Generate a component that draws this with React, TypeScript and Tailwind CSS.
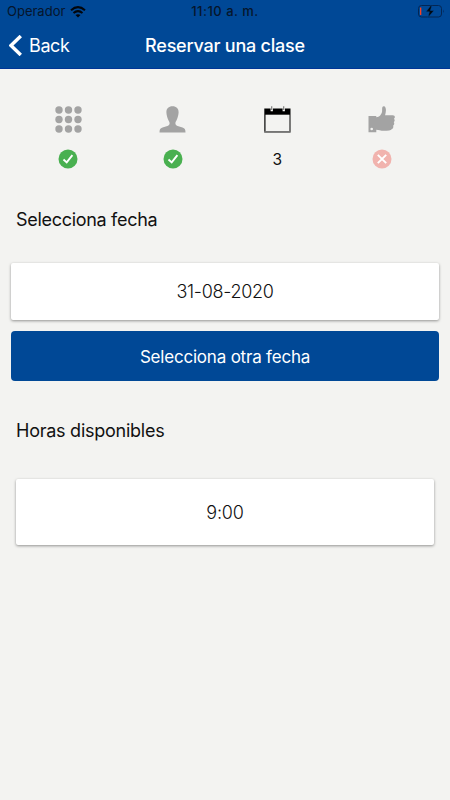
import type { ReactNode } from "react"

function GridIcon() {
  return (
    <svg width="27" height="27" viewBox="0 0 27 27" fill="#a3a3a3">
      {[4, 13.5, 23].map((cy) =>
        [4, 13.5, 23].map((cx) => <circle key={`${cx}-${cy}`} cx={cx} cy={cy} r="3.7" />)
      )}
    </svg>
  )
}

function PersonIcon() {
  return (
    <svg width="27" height="27" viewBox="0 0 27 27" fill="#a3a3a3">
      <path d="M13.5 .3C17.4 .3 19.7 2.7 19.6 6.4C19.5 8.5 18.8 11.4 17.8 13.7C17.1 15.3 16.5 15.8 16.4 17C16.3 18.7 17 19.3 18.6 19.9L23.5 21.5C25.7 22.3 26.5 23.3 26.5 26.5H.5C.5 23.3 1.3 22.3 3.5 21.5L8.4 19.9C10 19.3 10.7 18.7 10.6 17C10.5 15.8 9.9 15.3 9.2 13.7C8.2 11.4 7.5 8.5 7.4 6.4C7.3 2.7 9.6 .3 13.5 .3Z" />
    </svg>
  )
}

function CalendarIcon() {
  return (
    <svg width="27" height="27" viewBox="0 0 27 27">
      <path d="M.3 2.5H26.5V26.5H.3Z" fill="#000" />
      <path d="M1.5 8.7H25.5V25.2H1.5Z" fill="#f3f3f1" />
      <path d="M.3 25.2H26.5V26.5H.3Z" fill="#888" />
      <path d="M6.6 2H8.9V5.3H6.6ZM18.6 2H20.9V5.3H18.6Z" fill="#f3f3f1" />
      <path d="M7.7 .3V4M19.7 .3V4" stroke="#777" strokeWidth="1.1" />
    </svg>
  )
}

function ThumbIcon() {
  return (
    <svg width="27" height="27" viewBox="0 0 27 27" fill="#a3a3a3">
      <path fillRule="evenodd" d="M.5 10H8.3V11.2C11.2 11 13.7 8.5 14.1 5.2C14.2 3.1 14 1.8 14.6 .8C15.2 -.1 16.9 .2 17.5 1.8C18.4 4.1 17.7 7 17.1 9.3H24.8C26.3 9.3 27 10.3 26.8 11.4C26.7 12 26.3 12.5 25.9 12.8C27 13.4 26.9 15.5 25.8 16.2C26.6 17.2 26.2 19.2 25.1 19.7C25.7 20.8 25 22.6 23.9 23C23 24.5 20 24.8 15.6 24.8C12.5 24.8 11 23.9 8.3 23.7V26.3H.5ZM3.7 21.7A1.3 1.3 0 1 0 3.7 24.3A1.3 1.3 0 0 0 3.7 21.7Z" />
    </svg>
  )
}

function CheckBadge() {
  return (
    <svg width="20" height="20" viewBox="0 0 20 20" fill="none">
      <circle cx="10" cy="10" r="9.5" fill="#49b050" />
      <path d="M5.5 10.5L8.7 13.4L14.4 6.2" stroke="white" strokeWidth="1.9" />
    </svg>
  )
}

function CrossBadge() {
  return (
    <svg width="20" height="20" viewBox="0 0 20 20" fill="none">
      <circle cx="10" cy="10" r="9.5" fill="#f1b3ae" />
      <path d="M5.8 5.8L14.2 14.2M14.2 5.8L5.8 14.2" stroke="white" strokeWidth="1.9" />
    </svg>
  )
}

function Step({ icon, status }: { icon: ReactNode; status: ReactNode }) {
  return (
    <div className="flex flex-col items-center">
      {icon}
      <div className="mt-4 flex h-5 items-center text-[15.5px] leading-5">{status}</div>
    </div>
  )
}

export default function App() {
  return (
    <div className="flex h-[800px] w-[450px] flex-col overflow-hidden bg-[#f3f3f1] font-['Inter',sans-serif] text-[#111]">
      <header className="h-[69px] border-b border-[#003596] bg-[#004896]">
        {/* Status bar */}
        <div className="grid h-[23px] grid-cols-3 items-center pr-[5px] pl-[7px] text-[13px] text-[#06152b]">
          <div className="flex items-center gap-[5px]">
            <span>Operador</span>
            <svg width="16" height="12" viewBox="0 0 16 12" fill="none" stroke="#02060c" strokeWidth="2">
              <path d="M1 4.2Q8-2 15 4.2M3.5 7Q8 3.2 12.5 7" />
              <path d="M5.5 9.1Q8 7.2 10.5 9.1L8 11.6Z" fill="#02060c" stroke="none" />
            </svg>
          </div>
          <span className="-ml-0.5 text-center font-medium tracking-[0.5px] whitespace-nowrap">11:10 a. m.</span>
          <svg className="justify-self-end" width="27" height="13" viewBox="0 0 27 13" fill="none">
            <rect x=".5" y=".5" width="23" height="11.5" rx="3" stroke="#042653" />
            <path d="M25.3 4.5Q26.8 6.2 25.3 8Z" fill="#042653" />
            <rect x="2" y="2.5" width="1.3" height="7.5" fill="#fa4224" />
            <path d="M13.2 0L8 6.8H11.4L10 12.5L16 5.5H12.4L14 0Z" fill="#020910" stroke="#004896" strokeWidth=".5" />
          </svg>
        </div>
        {/* Navigation bar */}
        <div className="grid h-[45px] grid-cols-[1fr_auto_1fr] items-center text-white">
          <div className="flex items-center gap-[7px] pl-[9px]">
            <svg width="13" height="21" viewBox="0 0 13 21" fill="none" stroke="white" strokeWidth="3.4">
              <path d="M11.8 1L2 10.5L11.8 20" />
            </svg>
            <span className="text-[18px] tracking-[-0.4px]">Back</span>
          </div>
          <h1 className="text-[18px] font-medium tracking-[-0.22px]">Reservar una clase</h1>
        </div>
      </header>

      <main className="flex flex-col">
        <div className="grid grid-cols-4 px-4 pt-[37px]">
          <Step icon={<GridIcon />} status={<CheckBadge />} />
          <Step icon={<PersonIcon />} status={<CheckBadge />} />
          <Step icon={<CalendarIcon />} status={<span className="pt-0.5">3</span>} />
          <Step icon={<ThumbIcon />} status={<CrossBadge />} />
        </div>

        <section className="mt-[39px] px-[11px]">
          <h2 className="pl-[5px] text-[18px] leading-6 tracking-[-0.3px]">Selecciona fecha</h2>
          <div className="mt-[31px] flex h-[57px] items-center justify-center rounded-[2px] bg-white text-[18px] font-light tracking-[-0.3px] shadow-[0_1px_3px_rgba(0,0,0,0.4)]">
            31-08-2020
          </div>
          <button className="mt-[11px] h-[50px] w-full rounded-[4px] bg-[#004896] pt-[3px] text-[17px] tracking-[-0.2px] text-white">
            Selecciona otra fecha
          </button>
        </section>

        <section className="mt-[38px] px-4">
          <h2 className="text-[18px] leading-6 tracking-[-0.25px]">Horas disponibles</h2>
          <div className="mt-[36px] flex h-[66px] items-center justify-center rounded-[2px] bg-white text-[18px] font-light tracking-[-0.2px] shadow-[0_1px_3px_rgba(0,0,0,0.4)]">
            9:00
          </div>
        </section>
      </main>
    </div>
  )
}
